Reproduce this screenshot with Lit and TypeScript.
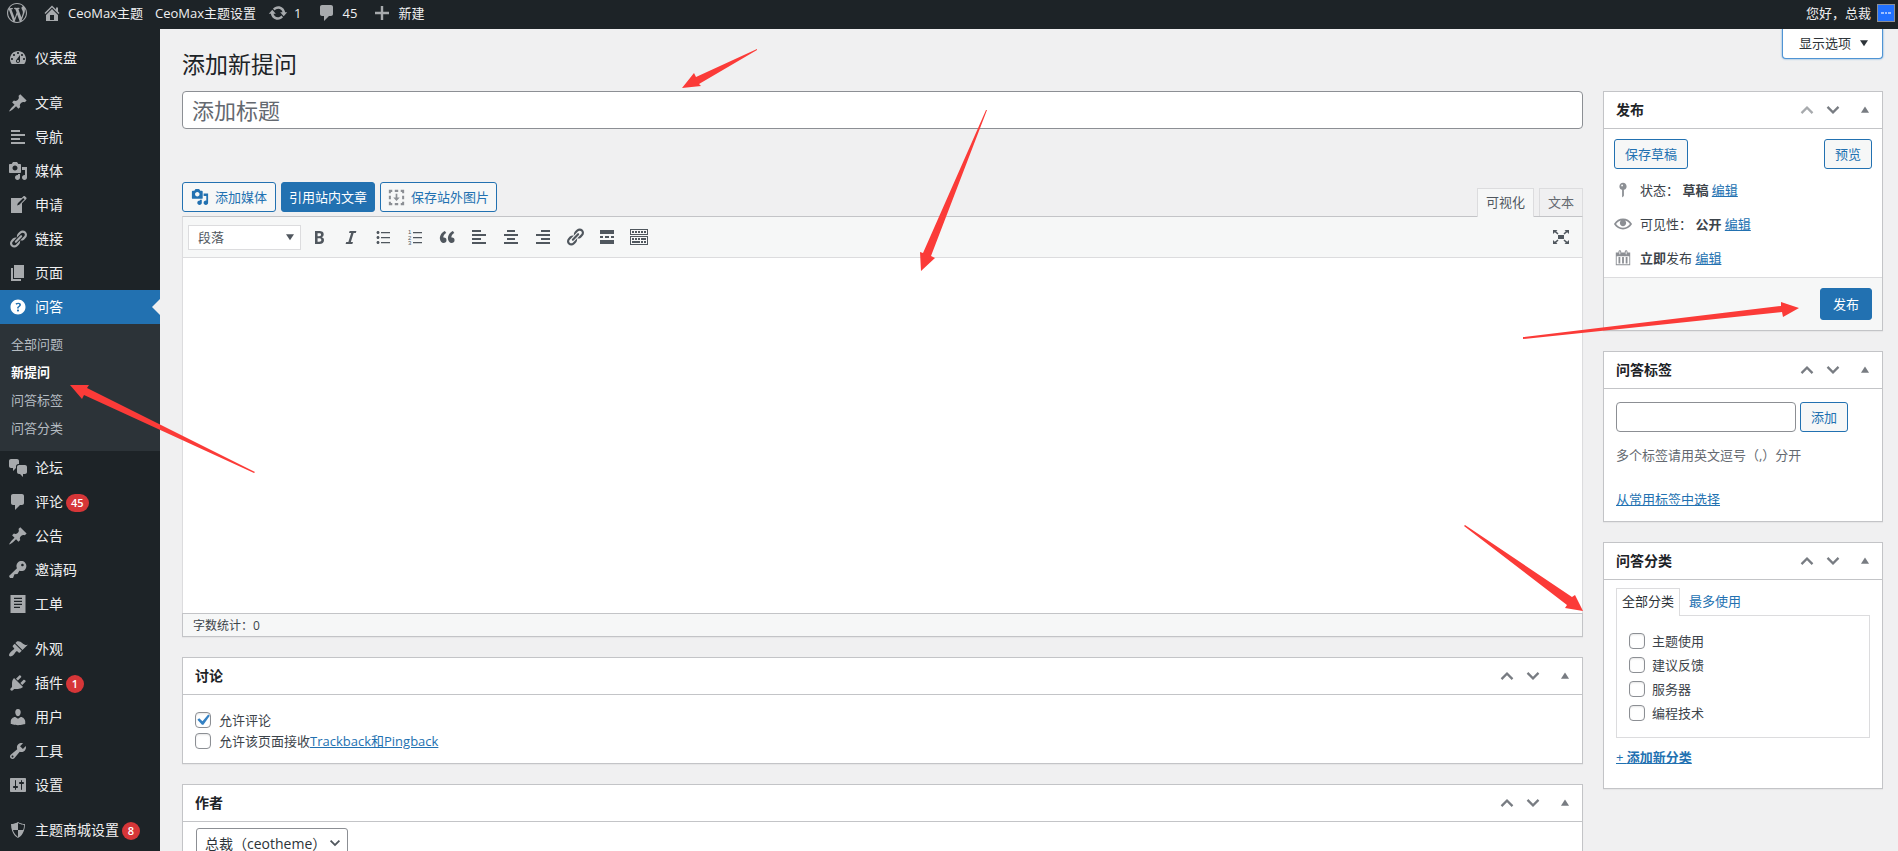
import { LitElement, html, svg, css, nothing } from "lit";
import { customElement, property } from "lit/decorators.js";
import { classMap } from "lit/directives/class-map.js";

const ICONS: Record<string, string> = {
  wordpress:
    "M20 10c0-5.51-4.49-10-10-10C4.48 0 0 4.49 0 10c0 5.52 4.48 10 10 10 5.51 0 10-4.48 10-10zM7.78 15.37L4.37 6.22c.55-.02 1.17-.08 1.17-.08.5-.06.44-1.13-.06-1.11 0 0-1.45.11-2.37.11-.18 0-.37 0-.58-.01C4.12 2.69 6.87 1.11 10 1.11c2.33 0 4.45.87 6.05 2.34-.68-.11-1.65.39-1.65 1.58 0 .74.45 1.36.9 2.1.35.61.55 1.36.55 2.46 0 1.49-1.4 5-1.4 5l-3.03-8.37c.54-.02.82-.17.82-.17.5-.05.44-1.25-.06-1.22 0 0-1.44.12-2.38.12-.87 0-2.33-.12-2.33-.12-.5-.03-.56 1.2-.06 1.22l.92.08 1.26 3.41zM17.41 10c.24-.64.74-1.87.43-4.25.7 1.29 1.05 2.71 1.05 4.25 0 3.29-1.73 6.24-4.4 7.78.97-2.59 1.94-5.2 2.92-7.78zM6.1 18.09C3.12 16.65 1.11 13.53 1.11 10c0-1.3.23-2.48.72-3.59C3.25 10.3 4.67 14.2 6.1 18.09zm4.03-6.63l2.58 6.98c-.86.29-1.76.45-2.71.45-.79 0-1.57-.11-2.29-.33.81-2.38 1.62-4.74 2.42-7.1z",
  home: "M16 8.5l1.53 1.53-1.06 1.06L10 4.6l-6.47 6.49-1.06-1.06L10 2.5l4 4v-2h2v4zm-6-2.46l6 5.99V18H4v-5.97zM12 17v-5H8v5h4z",
  update:
    "M10.2 3.28c3.53 0 6.43 2.61 6.92 6h2.08l-3.5 4-3.5-4h2.32c-.45-1.97-2.21-3.45-4.32-3.45-1.45 0-2.73.71-3.54 1.78L4.95 5.66C6.23 4.2 8.11 3.28 10.2 3.28zm-.4 13.44c-3.52 0-6.43-2.61-6.92-6H.8l3.5-4c1.17 1.33 2.33 2.67 3.5 4H5.48c.45 1.97 2.21 3.45 4.32 3.45 1.45 0 2.73-.71 3.54-1.78l1.71 1.95c-1.28 1.46-3.15 2.38-5.25 2.38z",
  comments: "M5 2h9c1.1 0 2 .9 2 2v7c0 1.1-.9 2-2 2h-2l-5 5v-5H5c-1.1 0-2-.9-2-2V4c0-1.1.9-2 2-2z",
  plus: "M17 8.800v2.400h-5.800V17H8.800v-5.800H3V8.800h5.800V3h2.400v5.800H17z",
  dashboard:
    "M3.76 16h12.48c1.1-1.37 1.76-3.11 1.76-5 0-4.42-3.58-8-8-8s-8 3.58-8 8c0 1.89.66 3.63 1.76 5zM10 4c.55 0 1 .45 1 1s-.45 1-1 1-1-.45-1-1 .45-1 1-1zM6 6c.55 0 1 .45 1 1s-.45 1-1 1-1-.45-1-1 .45-1 1-1zm8 0c.55 0 1 .45 1 1s-.45 1-1 1-1-.45-1-1 .45-1 1-1zm-5.37 5.55L12 7v6c0 1.1-.9 2-2 2s-2-.9-2-2c0-.57.24-1.08.63-1.45zM4 10c.55 0 1 .45 1 1s-.45 1-1 1-1-.45-1-1 .45-1 1-1zm12 0c.55 0 1 .45 1 1s-.45 1-1 1-1-.45-1-1 .45-1 1-1zm-5 3c0-.55-.45-1-1-1s-1 .45-1 1 .45 1 1 1 1-.45 1-1z",
  pin: "M10.44 3.02l1.82-1.82 6.36 6.35-1.83 1.82c-1.05-.68-2.48-.57-3.41.36l-.75.75c-.92.93-1.04 2.35-.35 3.41l-1.83 1.82-2.41-2.41-2.8 2.79c-.42.42-3.38 2.71-3.8 2.29s1.86-3.39 2.28-3.81l2.79-2.79L4.1 9.36l1.83-1.82c1.05.69 2.48.57 3.4-.36l.75-.75c.93-.92 1.05-2.35.36-3.41z",
  alignleft: "M12 5V3H3v2h9zm5 4V7H3v2h14zm-5 4v-2H3v2h9zm5 4v-2H3v2h14z",
  aligncenter: "M14 5V3H6v2h8zm3 4V7H3v2h14zm-3 4v-2H6v2h8zm3 4v-2H3v2h14z",
  alignright: "M17 5V3H8v2h9zm0 4V7H3v2h14zm0 4v-2H8v2h9zm0 4v-2H3v2h14z",
  media:
    "M13 11V4c0-.55-.45-1-1-1h-1.67L9 1H5L3.67 3H2c-.55 0-1 .45-1 1v7c0 .55.45 1 1 1h10c.55 0 1-.45 1-1zM7 4.5c1.38 0 2.5 1.12 2.5 2.5S8.38 9.5 7 9.5 4.5 8.38 4.5 7 5.62 4.5 7 4.5zM14 6h5v10.5c0 1.38-1.12 2.5-2.5 2.5S14 17.88 14 16.5s1.12-2.5 2.5-2.5c.17 0 .34.02.5.05V9h-3V6zm-4 8.05V13h2v3.5c0 1.38-1.12 2.5-2.5 2.5S7 17.88 7 16.5 8.12 14 9.5 14c.17 0 .34.02.5.05z",
  write:
    "M16.89 1.2l1.41 1.41c.39.39.39 1.02 0 1.41L14 8.33V18H3V3h10.67l1.8-1.8c.4-.39 1.03-.4 1.42 0zm-5.66 8.48l5.37-5.36-1.42-1.42-5.36 5.37-.71 2.12z",
  link: "M17.74 2.76c1.68 1.69 1.68 4.41 0 6.1l-1.53 1.52c-1.12 1.12-2.7 1.47-4.14 1.09l2.62-2.61.76-.77.76-.76c.84-.84.84-2.2 0-3.04-.84-.85-2.2-.85-3.04 0l-.77.76-3.38 3.38c-.37-1.44-.02-3.02 1.1-4.14l1.52-1.53c1.69-1.68 4.42-1.68 6.1 0zM8.59 13.43l5.34-5.34c.42-.42.42-1.1 0-1.52-.44-.43-1.13-.39-1.53 0l-5.33 5.34c-.42.42-.42 1.1 0 1.52.44.43 1.13.39 1.52 0zm-.76 2.29l4.14-4.15c.38 1.44.03 3.02-1.09 4.14l-1.52 1.53c-1.69 1.68-4.41 1.68-6.1 0-1.68-1.68-1.68-4.42 0-6.1l1.53-1.52c1.12-1.12 2.7-1.47 4.14-1.1l-4.14 4.15c-.85.84-.85 2.2 0 3.05.84.84 2.2.84 3.04 0z",
  page: "M6 15V2h10v13H6zm-1 1h8v2H3V5h2v11z",
  help: "M17.500 10c0-4.140-3.360-7.500-7.500-7.500S2.500 5.860 2.500 10s3.360 7.500 7.500 7.500 7.500-3.360 7.500-7.500zm-6.800 1.480H9.14v-.43c0-.38.08-.7.24-.98s.46-.57.88-.89c.41-.29.68-.53.81-.71.14-.18.2-.39.2-.62 0-.25-.09-.44-.28-.58-.19-.13-.45-.19-.79-.19-.58 0-1.25.19-2 .57l-.64-1.28c.87-.49 1.8-.74 2.77-.74.81 0 1.45.2 1.92.58.48.39.71.91.71 1.55 0 .43-.09.8-.29 1.11-.19.32-.57.67-1.11 1.06-.38.28-.61.49-.71.63-.1.15-.15.34-.15.57v.35zm-1.470 2.740c-.18-.17-.27-.42-.27-.73 0-.33.08-.58.26-.75s.43-.25.77-.25c.32 0 .57.09.75.26s.27.42.27.74c0 .3-.09.55-.27.72-.18.18-.43.27-.75.27-.33 0-.58-.09-.76-.26z",
  chat: "M11 6h-.82C9.07 6 8 7.2 8 8.16V10l-3 3v-3H3c-1.1 0-2-.9-2-2V3c0-1.1.9-2 2-2h6c1.1 0 2 .9 2 2v3zm0 1h6c1.1 0 2 .9 2 2v5c0 1.1-.9 2-2 2h-2v3l-3-3h-1c-1.1 0-2-.9-2-2V9c0-1.1.9-2 2-2z",
  key: "M16.95 2.58c1.96 1.95 1.96 5.12 0 7.07-1.51 1.51-3.75 1.84-5.59 1.01l-1.87 3.31-2.99.31L5 18H2l-1-2 7.95-7.69c-.92-1.87-.62-4.18.93-5.73 1.95-1.96 5.12-1.96 7.07 0zm-2.51 3.79c.74 0 1.33-.6 1.33-1.34 0-.73-.59-1.33-1.33-1.33-.73 0-1.33.6-1.33 1.33 0 .74.6 1.34 1.33 1.34z",
  document: "M2.500 1v18h15V1h-15zM12 14H6v-1.200h6V14zm2-3H6V9.800h8V11zm0-3H6V6.800h8V8zm0-3H6V3.800h8V5z",
  appearance:
    "M14.48 11.06L7.41 3.99l1.5-1.5c.5-.56 2.3-.47 3.51.32 1.21.8 1.43 1.28 2.91 2.1 1.18.64 2.45 1.26 4.45.85zm-.71.71L6.7 4.7 4.93 6.47c-.39.39-.39 1.02 0 1.41l1.06 1.06c.39.39.39 1.03 0 1.42-.6.6-1.43 1.11-2.21 1.69-.35.26-.7.53-1.01.84C1.43 14.23.4 16.08 1.4 17.07c.99 1 2.84-.03 4.18-1.36.31-.31.58-.66.85-1.02.57-.78 1.08-1.61 1.69-2.21.39-.39 1.02-.39 1.41 0l1.06 1.06c.39.39 1.02.39 1.41 0z",
  plugins:
    "M13.11 4.36L9.87 7.6 8 5.73l3.24-3.24c.35-.34 1.05-.2 1.56.32.52.51.66 1.21.31 1.55zm-8 1.77l.91-1.12 9.01 9.01-1.19.84c-.71.71-2.63 1.16-3.82 1.16H6.14L4.9 17.26c-.59.59-1.54.59-2.12 0-.59-.58-.59-1.53 0-2.12l1.24-1.24v-3.88c0-1.13.4-3.19 1.09-3.89zm7.26 3.97l3.24-3.24c.34-.35 1.04-.21 1.55.31.52.51.66 1.21.31 1.55l-3.24 3.25z",
  users:
    "M10 9.25c-2.27 0-2.73-3.44-2.73-3.44C7 4.02 7.82 2 9.97 2c2.16 0 2.98 2.02 2.71 3.81 0 0-.41 3.44-2.68 3.44zm0 2.57L12.72 10c2.39 0 4.52 2.33 4.52 4.53v2.49s-3.65 1.13-7.24 1.13c-3.65 0-7.24-1.13-7.24-1.13v-2.49c0-2.25 1.94-4.48 4.47-4.48z",
  tools:
    "M16.68 9.77c-1.34 1.34-3.3 1.67-4.95.99l-5.41 6.52c-.99.99-2.59.99-3.58 0s-.99-2.59 0-3.57l6.52-5.42c-.68-1.65-.35-3.61.99-4.95 1.28-1.28 3.12-1.62 4.72-1.06l-2.89 2.89 2.82 2.82 2.86-2.87c.53 1.58.18 3.39-1.08 4.65zM3.81 16.21c.4.39 1.04.39 1.43 0 .4-.4.4-1.04 0-1.43-.39-.4-1.03-.4-1.43 0-.39.39-.39 1.03 0 1.43z",
  settings:
    "M18 16V4c0-.55-.45-1-1-1H3c-.55 0-1 .45-1 1v12c0 .55.45 1 1 1h14c.55 0 1-.45 1-1zM8 11h1c.55 0 1 .45 1 1s-.45 1-1 1H8v1.5c0 .28-.22.5-.5.5s-.5-.22-.5-.5V13H6c-.55 0-1-.45-1-1s.45-1 1-1h1V5.5c0-.28.22-.5.5-.5s.5.22.5.5V11zm5-2h-1c-.55 0-1-.45-1-1s.45-1 1-1h1V5.5c0-.28.22-.5.5-.5s.5.22.5.5V7h1c.55 0 1 .45 1 1s-.45 1-1 1h-1v5.5c0 .28-.22.5-.5.5s-.5-.22-.5-.5V9z",
  shield: "M10 2s3 2 7 2c0 11-7 14-7 14S3 15 3 4c4 0 7-2 7-2zm0 8h5s1-1 1-5c0 0-5-1-6-2v7H5c1 4 5 7 5 7v-7z",
  status:
    "M14 6c0 1.86-1.28 3.41-3 3.86V16c0 1-2 2-2 2V9.860c-1.720-.45-3-2-3-3.860 0-2.210 1.790-4 4-4s4 1.790 4 4zM8 5c0 .55.45 1 1 1s1-.45 1-1-.45-1-1-1-1 .45-1 1z",
  eye: "M19.700 9.400C17.700 6 14 3.900 10 3.900S2.300 6 .3 9.400L0 10l.3.600c2 3.400 5.700 5.500 9.700 5.500s7.700-2.100 9.700-5.500l.3-.6-.3-.6zM10 14.100c-3.100 0-6-1.600-7.700-4.100C3.600 8 5.700 6.600 8 6.100c-.9.600-1.500 1.700-1.500 2.900 0 1.900 1.600 3.500 3.500 3.500s3.500-1.600 3.500-3.500c0-1.200-.6-2.300-1.500-2.900 2.300.5 4.400 1.900 5.700 3.900-1.700 2.500-4.600 4.100-7.700 4.100z",
  calendar:
    "M15 4h3v14H2V4h3V3c0-.83.67-1.500 1.500-1.500S8 2.170 8 3v1h4V3c0-.83.67-1.500 1.500-1.500S15 2.170 15 3v1zM6 3v2.500c0 .28.22.5.5.5s.5-.22.5-.5V3c0-.28-.22-.5-.5-.5S6 2.720 6 3zm7 0v2.500c0 .28.22.5.5.5s.5-.22.5-.5V3c0-.28-.22-.5-.5-.5s-.5.22-.5.5zm4 14V8H3v9h14zM7 16V9H5v7h2zm4 0V9H9v7h2zm4 0V9h-2v7h2z",
  bold: "M6 4v13h4.54c1.37 0 2.46-.33 3.26-1 .8-.66 1.2-1.58 1.2-2.77 0-.84-.17-1.51-.51-2.01s-.9-.85-1.67-1.03v-.09c.57-.1 1.02-.4 1.36-.9s.51-1.13.51-1.91c0-1.14-.39-1.98-1.17-2.5C12.75 4.26 11.5 4 9.78 4H6zm2.57 5.15V6.26h1.36c.73 0 1.27.11 1.61.32.34.22.51.58.51 1.07 0 .54-.16.92-.47 1.15s-.82.35-1.51.35h-1.5zm0 2.19h1.6c1.44 0 2.16.53 2.16 1.61 0 .6-.17 1.05-.51 1.34s-.86.43-1.57.43H8.57v-3.38z",
  italic: "M14.780 6h-2.130l-2.800 9h2.120l-.620 2H4.600l.620-2h2.140l2.800-9H8.030l.620-2h6.750z",
  bullets:
    "M5 7C4.170 7 3.500 6.330 3.500 5.500S4.170 4 5 4s1.500.670 1.500 1.500S5.830 7 5 7zM8 5h9v1.200H8V5zm-3 7c-.83 0-1.500-.67-1.500-1.500S4.170 9 5 9s1.500.670 1.500 1.500S5.830 12 5 12zm3-2h9v1.200H8V10zm-3 7c-.83 0-1.500-.67-1.500-1.500S4.170 14 5 14s1.500.670 1.500 1.500S5.830 17 5 17zm3-2h9v1.200H8V15z",
  quote:
    "M9.49 13.22c0-.74-.2-1.38-.61-1.9-.62-.78-1.83-.88-2.53-.72-.29-1.65 1.11-3.75 2.92-4.65L7.88 4c-2.73 1.3-5.42 4.28-4.96 8.05C3.21 14.43 4.59 16 6.54 16c.85 0 1.56-.25 2.12-.75s.83-1.18.83-2.03zm8.05 0c0-.74-.2-1.38-.61-1.9-.63-.78-1.83-.88-2.53-.72-.29-1.65 1.11-3.75 2.92-4.65L15.93 4c-2.73 1.3-5.41 4.28-4.95 8.05.29 2.38 1.66 3.95 3.61 3.95.85 0 1.56-.25 2.12-.75s.83-1.18.83-2.03z",
  more: "M17 7V3H3v4h14zM6 11V9H3v2h3zm6 0V9H8v2h4zm5 0V9h-3v2h3zm0 6v-4H3v4h14z",
  sink: "M19 2v6H1V2h18zm-1 5V3H2v4h16zM5 4v2H3V4h2zm3 0v2H6V4h2zm3 0v2H9V4h2zm3 0v2h-2V4h2zm3 0v2h-2V4h2zm2 5v9H1V9h18zm-1 8v-7H2v7h16zM5 11v2H3v-2h2zm3 0v2H6v-2h2zm3 0v2H9v-2h2zm6 0v2h-5v-2h5zm-6 3v2H3v-2h8zm3 0v2h-2v-2h2zm3 0v2h-2v-2h2z",
  fullscreen:
    "M7 8h6v4H7zM2 3h4.500L5.200 4.300 7.500 6.600 6.600 7.500 3.800 5.200 2 7zM18 3v4l-1.800-1.800-2.800 2.300-.9-.9 2.300-2.300L13.500 3zM2 17v-4l1.800 1.800 2.800-2.300.9.900-2.300 2.300L6.500 17zM18 17h-4.500l1.300-1.300-2.300-2.300.9-.9 2.800 2.300L18 13z",
  capture:
    "M1 1h4v2.400H3.400V5H1zM8 1h4v2.400H8zM15 1h4v4h-2.400V3.400H15zM1 8h2.400v4H1zM16.600 8H19v4h-2.400zM1 15h2.400v1.600H5V19H1zM8 16.600h4V19H8zM16.600 15H19v4h-4v-2.400h1.600zM9 5.500h2V10h2.800L10 14.200 6.200 10H9z",
  up: "M10 6l6.300 6.300-1.600 1.600L10 9.200l-4.700 4.700-1.600-1.600z",
  down: "M10 14L3.700 7.700l1.600-1.600L10 10.800l4.700-4.700 1.600 1.600z",
  toggle: "M10 6l4.500 7h-9z",
  caret: "M5 6.500h10l-5 7.500z",
};

@customElement("wp-icon")
export class WpIcon extends LitElement {
  @property() name = "";

  static styles = css`
    :host {
      display: inline-block;
      flex: none;
      width: 20px;
      height: 20px;
    }
    .glyph {
      display: block;
      width: 100%;
      height: 100%;
      fill: currentColor;
    }
    .digits {
      font: 6px "Liberation Sans", sans-serif;
    }
  `;

  render() {
    const shape =
      this.name === "numbers"
        ? svg`<path d="M8 5h9v1.200H8zM8 10h9v1.200H8zM8 15h9v1.200H8z"/>
            <text class="digits" x="3" y="7">1</text>
            <text class="digits" x="3" y="12.500">2</text>
            <text class="digits" x="3" y="18">3</text>`
        : svg`<path fill-rule="evenodd" d=${ICONS[this.name] ?? ""} />`;
    return html`<svg class="glyph" viewBox="0 0 20 20" aria-hidden="true">${shape}</svg>`;
  }
}

@customElement("meta-box")
export class MetaBox extends LitElement {
  @property() heading = "";
  @property({ type: Boolean }) first = false;

  static styles = css`
    :host {
      display: block;
      background: #fff;
      border: 1px solid #c3c4c7;
      box-shadow: 0 1px 1px rgba(0, 0, 0, 0.04);
    }
    .head {
      display: flex;
      align-items: center;
      height: 36px;
      padding: 0 4px 0 12px;
      border-bottom: 1px solid #c3c4c7;
    }
    .title {
      flex: 1;
      margin: 0;
      font-size: 14px;
      font-weight: 600;
      line-height: 20px;
      color: #1d2327;
    }
    .handle {
      display: grid;
      place-items: center;
      width: 26px;
      height: 36px;
      padding: 0;
      border: 0;
      background: none;
      color: #787c82;
    }
    .handle.muted {
      color: #a7aaad;
    }
    .handle.toggle {
      margin-left: 6px;
    }
    .small {
      width: 18px;
      height: 18px;
    }
  `;

  render() {
    return html`
      <header class="head">
        <h2 class="title">${this.heading}</h2>
        <button class=${classMap({ handle: true, muted: this.first })} type="button" aria-label="上移">
          <wp-icon name="up"></wp-icon>
        </button>
        <button class="handle" type="button" aria-label="下移"><wp-icon name="down"></wp-icon></button>
        <button class="handle toggle" type="button" aria-label="切换面板">
          <wp-icon class="small" name="toggle"></wp-icon>
        </button>
      </header>
      <slot></slot>
    `;
  }
}

interface MenuItem {
  icon: string;
  label: string;
  count?: number;
  children?: string[];
}

const MENU: MenuItem[][] = [
  [{ icon: "dashboard", label: "仪表盘" }],
  [
    { icon: "pin", label: "文章" },
    { icon: "alignleft", label: "导航" },
    { icon: "media", label: "媒体" },
    { icon: "write", label: "申请" },
    { icon: "link", label: "链接" },
    { icon: "page", label: "页面" },
    { icon: "help", label: "问答", children: ["全部问题", "新提问", "问答标签", "问答分类"] },
    { icon: "chat", label: "论坛" },
    { icon: "comments", label: "评论", count: 45 },
    { icon: "pin", label: "公告" },
    { icon: "key", label: "邀请码" },
    { icon: "document", label: "工单" },
  ],
  [
    { icon: "appearance", label: "外观" },
    { icon: "plugins", label: "插件", count: 1 },
    { icon: "users", label: "用户" },
    { icon: "tools", label: "工具" },
    { icon: "settings", label: "设置" },
  ],
  [{ icon: "shield", label: "主题商城设置", count: 8 }],
];

const TOOLS: [string, string][] = [
  ["bold", "粗体"],
  ["italic", "斜体"],
  ["bullets", "项目符号列表"],
  ["numbers", "编号列表"],
  ["quote", "段落引用"],
  ["alignleft", "左对齐"],
  ["aligncenter", "居中对齐"],
  ["alignright", "右对齐"],
  ["link", "插入链接"],
  ["more", "插入阅读更多标签"],
  ["sink", "工具栏切换"],
];

const CATEGORIES = ["主题使用", "建议反馈", "服务器", "编程技术"];

const ARROWS = [
  "682,88 694,73 696,77 757,49 757,50 699,84 701,86",
  "921,271 920,252 923,253 986,110 987,110 931,256 935,258",
  "70,385 89,385 87,388 255,472 254,473 84,395 82,399",
  "1799,308 1781,302 1781,306 1523,337 1523,339 1782,312 1783,317",
  "1583,611 1575,595 1572,597 1465,525 1464,526 1567,605 1565,608",
];

@customElement("app-root")
export class AppRoot extends LitElement {
  static styles = css`
    :host {
      position: relative;
      display: flex;
      flex-direction: column;
      height: 100vh;
      overflow: hidden;
      background: #f0f0f1;
      color: #3c434a;
      font: 13px/20px "Open Sans", "Noto Sans CJK SC", sans-serif;
    }
    * {
      box-sizing: border-box;
    }
    a {
      color: #2271b1;
    }
    button,
    input,
    select {
      font-family: inherit;
    }

    .bar {
      display: flex;
      flex: none;
      align-items: center;
      height: 29px;
      padding: 0 3px 4px 7px;
      background: #1d2327;
    }
    .bar a {
      display: flex;
      align-items: center;
      gap: 6px;
      margin-right: 15px;
      color: #f0f0f1;
      text-decoration: none;
    }
    .bar .site {
      margin-right: 12px;
    }
    .bar wp-icon {
      color: #a7aaad;
    }
    .bar .account {
      margin: 0 0 0 auto;
    }
    .avatar {
      width: 18px;
      height: 18px;
      border: 1px solid #8c8f94;
      background: #2271ff;
    }

    .body {
      display: flex;
      flex: 1;
      min-height: 0;
    }
    .side {
      flex: none;
      width: 160px;
      padding-top: 12px;
      overflow: hidden;
      background: #1d2327;
    }
    .group,
    .submenu {
      margin: 0;
      padding: 0;
      list-style: none;
    }
    .group {
      margin-bottom: 11px;
    }
    .entry {
      position: relative;
      display: flex;
      align-items: center;
      height: 34px;
      padding: 0 8px;
      font-size: 14px;
      color: #f0f0f1;
      text-decoration: none;
    }
    .entry wp-icon {
      margin-right: 7px;
      color: #a7aaad;
    }
    .entry.current {
      background: #2271b1;
      color: #fff;
    }
    .entry.current wp-icon {
      color: #fff;
    }
    .entry.current::after {
      content: "";
      position: absolute;
      right: 0;
      border: 8px solid transparent;
      border-right-color: #f0f0f1;
      border-left-width: 0;
    }
    .count {
      min-width: 18px;
      height: 18px;
      margin: 2px 0 0 3px;
      padding: 0 5px;
      border-radius: 9px;
      background: #d63638;
      color: #fff;
      font-size: 11px;
      font-weight: 600;
      line-height: 18px;
      text-align: center;
    }
    .submenu {
      padding: 6px 0 9px;
      background: #2c3338;
    }
    .submenu a {
      display: block;
      padding: 4px 11px;
      color: #b5bcc2;
      text-decoration: none;
    }
    .submenu .on {
      color: #fff;
      font-weight: 600;
    }

    .content {
      position: relative;
      flex: 1;
      min-width: 0;
      padding: 20px 15px 20px 22px;
      overflow-y: auto;
      scrollbar-width: none;
    }
    .options {
      position: absolute;
      top: 0;
      right: 15px;
      display: flex;
      align-items: center;
      height: 30px;
      padding: 0 10px 2px 16px;
      border: 1px solid #4f94d4;
      border-top: 0;
      border-radius: 0 0 4px 4px;
      background: #fff;
      box-shadow: 0 0 2px #4f94d4;
      color: #2c3338;
      font-size: 13px;
      line-height: 20px;
    }
    .options wp-icon {
      width: 16px;
      height: 16px;
      margin-left: 5px;
    }
    .heading {
      margin: 0 0 12px;
      font-size: 23px;
      font-weight: 400;
      line-height: 30px;
      color: #1d2327;
    }
    .columns {
      display: grid;
      grid-template-columns: minmax(0, 1fr) 280px;
      gap: 20px;
      align-items: start;
    }
    .stack {
      display: grid;
      gap: 20px;
    }
    .field {
      width: 100%;
      margin: 0;
      border: 1px solid #8c8f94;
      border-radius: 4px;
      background: #fff;
      color: #2c3338;
    }
    .subject {
      display: block;
      height: 38px;
      padding: 0 9px;
      font-size: 22px;
    }
    .subject::placeholder {
      color: #646970;
      opacity: 1;
    }

    .btn {
      display: inline-flex;
      flex: none;
      align-items: center;
      justify-content: center;
      gap: 6px;
      height: 30px;
      margin: 0;
      padding: 0 10px 1px;
      border: 1px solid #2271b1;
      border-radius: 3px;
      background: #f6f7f7;
      color: #2271b1;
      font-size: 13px;
      line-height: 20px;
    }
    .btn.primary {
      background: #2271b1;
      color: #fff;
    }
    .btn.large {
      height: 32px;
      padding: 0 12px 1px;
    }
    .btn.tight {
      padding: 0 7px 1px;
    }
    .btn.media {
      padding: 0 8px;
    }
    .btn.media wp-icon {
      width: 18px;
      height: 18px;
    }
    .btn.capture {
      padding: 0 7px;
    }
    .btn.capture wp-icon {
      width: 17px;
      height: 17px;
      color: #8c8f94;
    }

    .tools {
      display: flex;
      gap: 5px;
      align-items: flex-start;
      margin-top: 33px;
    }
    .tabs {
      display: flex;
      gap: 5px;
      margin: 6px 0 0 auto;
    }
    .tab {
      height: 28px;
      padding: 0 8px 1px;
      border: 1px solid #dcdcde;
      border-bottom: 0;
      background: #f0f0f1;
      color: #646970;
      font-size: 13px;
      line-height: 20px;
    }
    .tab.on {
      z-index: 1;
      height: 29px;
      margin-bottom: -1px;
      padding-bottom: 2px;
      background: #f6f7f7;
      color: #50575e;
    }
    .editor {
      border: 1px solid #dcdcde;
      border-top-color: #c3c4c7;
      background: #fff;
      box-shadow: 0 1px 1px rgba(0, 0, 0, 0.04);
    }
    .toolbar {
      display: flex;
      gap: 4px;
      align-items: center;
      height: 41px;
      padding: 0 5px;
      border-bottom: 1px solid #dcdcde;
      background: #f6f7f7;
    }
    .tool {
      display: grid;
      place-items: center;
      width: 28px;
      height: 28px;
      padding: 0;
      border: 0;
      background: none;
      color: #50575e;
    }
    .tool.last {
      margin: 0 2px 0 auto;
    }
    .picker {
      position: relative;
      display: block;
    }
    .picker select {
      display: block;
      width: 100%;
      appearance: none;
      margin: 0;
    }
    .picker wp-icon {
      position: absolute;
      pointer-events: none;
    }
    .format {
      width: 113px;
      color: #50575e;
    }
    .format select {
      height: 25px;
      padding: 0 9px;
      border: 1px solid #dcdcde;
      border-radius: 0;
      background: #fff;
      color: #50575e;
      font-size: 13px;
    }
    .format wp-icon {
      top: 4px;
      right: 3px;
      width: 16px;
      height: 16px;
    }
    .canvas {
      height: 355px;
      outline: 0;
    }
    .words {
      margin: 0 -1px -1px;
      padding: 2px 10px 0;
      border: 1px solid #c3c4c7;
      background: #f6f7f7;
      font-size: 12px;
    }

    .discussion {
      padding: 15px 12px 11px;
    }
    .check {
      display: flex;
      align-items: center;
      gap: 8px;
      height: 21px;
      padding-bottom: 1px;
    }
    .check input {
      display: grid;
      flex: none;
      place-content: center;
      width: 16px;
      height: 16px;
      margin: 0;
      appearance: none;
      border: 1px solid #8c8f94;
      border-radius: 4px;
      background: #fff;
      box-shadow: inset 0 1px 2px rgba(0, 0, 0, 0.1);
    }
    .check input:checked::before {
      content: "";
      width: 20px;
      height: 20px;
      background: #3582c4;
      clip-path: path("M15.200 4.600l1.600 1.200-6.400 9H9L4.400 9.800l1.800-1.600 3.300 3.100z");
    }
    .author {
      padding: 6px 13px 12px;
    }
    .author .picker {
      width: 152px;
    }
    .author select {
      height: 30px;
      padding: 0 8px;
      border: 1px solid #8c8f94;
      border-radius: 3px;
      background: #fff;
      color: #2c3338;
      font-size: 14px;
    }
    .author wp-icon {
      top: 7px;
      right: 5px;
      width: 16px;
      height: 16px;
      color: #50575e;
    }

    .publish {
      padding: 10px 10px 2px;
    }
    .pair {
      display: flex;
      justify-content: space-between;
      margin-bottom: 4px;
    }
    .row {
      display: flex;
      align-items: center;
      height: 34px;
    }
    .row wp-icon {
      width: 18px;
      height: 18px;
      margin-right: 8px;
      color: #8c8f94;
    }
    .row b {
      font-weight: 600;
    }
    .submit {
      display: flex;
      justify-content: flex-end;
      padding: 10px;
      border-top: 1px solid #dcdcde;
      background: #f6f7f7;
    }
    .tags {
      padding: 13px 12px 12px;
    }
    .adder {
      display: flex;
      gap: 4px;
    }
    .adder .field {
      width: 180px;
      height: 30px;
      padding: 0 8px;
      font-size: 14px;
    }
    .hint {
      margin: 13px 0 24px;
      color: #646970;
    }
    .cats {
      padding: 8px 12px 21px;
    }
    .catnav {
      display: flex;
    }
    .catnav a {
      padding: 3px 9px 4px;
      text-decoration: none;
    }
    .catnav .on {
      z-index: 1;
      margin-bottom: -1px;
      padding: 2px 5px 5px;
      border: 1px solid #dcdcde;
      border-bottom: 0;
      background: #fff;
      color: #2c3338;
    }
    .panel {
      margin-bottom: 9px;
      padding: 14px 12px 11px;
      border: 1px solid #dcdcde;
    }
    .panel .check {
      gap: 7px;
      height: 24px;
      padding-bottom: 2px;
    }
    .new {
      font-weight: 600;
    }
    .plain {
      font-weight: 400;
    }
    .arrows {
      position: absolute;
      top: 0;
      left: 0;
      z-index: 5;
      width: 1898px;
      height: 851px;
      fill: #fb3b38;
      pointer-events: none;
    }
  `;

  private renderEntry(item: MenuItem) {
    return html`<li>
      <a class=${classMap({ entry: true, current: !!item.children })} href="#">
        <wp-icon name=${item.icon}></wp-icon>${item.label}
        ${item.count ? html`<span class="count">${item.count}</span>` : nothing}
      </a>
      ${item.children
        ? html`<ul class="submenu">
            ${item.children.map(
              (label) => html`<li><a class=${classMap({ on: label === "新提问" })} href="#">${label}</a></li>`
            )}
          </ul>`
        : nothing}
    </li>`;
  }

  private renderEditor() {
    return html`
      <input class="field subject" type="text" placeholder="添加标题" aria-label="添加标题" />
      <div>
        <div class="tools">
          <button class="btn media" type="button"><wp-icon name="media"></wp-icon>添加媒体</button>
          <button class="btn primary tight" type="button">引用站内文章</button>
          <button class="btn capture" type="button"><wp-icon name="capture"></wp-icon>保存站外图片</button>
          <div class="tabs">
            <button class="tab on" type="button">可视化</button>
            <button class="tab" type="button">文本</button>
          </div>
        </div>
        <div class="editor">
          <div class="toolbar">
            <label class="picker format">
              <select aria-label="段落格式">
                <option>段落</option>
              </select>
              <wp-icon name="caret"></wp-icon>
            </label>
            ${TOOLS.map(
              ([icon, label]) => html`<button class="tool" type="button" aria-label=${label}>
                <wp-icon name=${icon}></wp-icon>
              </button>`
            )}
            <button class="tool last" type="button" aria-label="免打扰写作模式">
              <wp-icon name="fullscreen"></wp-icon>
            </button>
          </div>
          <div class="canvas" contenteditable="true" role="textbox" aria-label="正文"></div>
          <div class="words">字数统计：0</div>
        </div>
      </div>
    `;
  }

  render() {
    return html`
      <header class="bar">
        <a href="#" aria-label="WordPress"><wp-icon name="wordpress"></wp-icon></a>
        <a class="site" href="#"><wp-icon name="home"></wp-icon>CeoMax主题</a>
        <a class="site" href="#">CeoMax主题设置</a>
        <a href="#"><wp-icon name="update"></wp-icon>1</a>
        <a href="#"><wp-icon name="comments"></wp-icon>45</a>
        <a href="#"><wp-icon name="plus"></wp-icon>新建</a>
        <a class="account" href="#">
          您好，总裁
          <svg class="avatar" viewBox="0 0 16 16" aria-hidden="true">
            <path d="M3 8h3M7 8h2M10 8h3" stroke="#9fc0ff" stroke-width="2" />
          </svg>
        </a>
      </header>
      <div class="body">
        <nav class="side" aria-label="主菜单">
          ${MENU.map((group) => html`<ul class="group">${group.map((item) => this.renderEntry(item))}</ul>`)}
        </nav>
        <main class="content">
          <button class="options" type="button">显示选项<wp-icon name="caret"></wp-icon></button>
          <h1 class="heading">添加新提问</h1>
          <div class="columns">
            <div class="stack">
              ${this.renderEditor()}
              <meta-box heading="讨论">
                <div class="discussion">
                  <label class="check"><input type="checkbox" checked />允许评论</label>
                  <label class="check">
                    <input type="checkbox" />
                    <span>允许该页面接收<a href="#">Trackback和Pingback</a></span>
                  </label>
                </div>
              </meta-box>
              <meta-box heading="作者">
                <div class="author">
                  <label class="picker">
                    <select aria-label="作者">
                      <option>总裁（ceotheme）</option>
                    </select>
                    <wp-icon name="down"></wp-icon>
                  </label>
                </div>
              </meta-box>
            </div>
            <div class="stack">
              <meta-box heading="发布" first>
                <div class="publish">
                  <div class="pair">
                    <button class="btn" type="button">保存草稿</button>
                    <button class="btn" type="button">预览</button>
                  </div>
                  <div class="row">
                    <wp-icon name="status"></wp-icon>
                    <span>状态： <b>草稿</b> <a href="#">编辑</a></span>
                  </div>
                  <div class="row">
                    <wp-icon name="eye"></wp-icon>
                    <span>可见性： <b>公开</b> <a href="#">编辑</a></span>
                  </div>
                  <div class="row">
                    <wp-icon name="calendar"></wp-icon>
                    <span><b>立即</b>发布 <a href="#">编辑</a></span>
                  </div>
                </div>
                <div class="submit"><button class="btn primary large" type="button">发布</button></div>
              </meta-box>
              <meta-box heading="问答标签">
                <div class="tags">
                  <div class="adder">
                    <input class="field" type="text" aria-label="添加标签" />
                    <button class="btn" type="button">添加</button>
                  </div>
                  <p class="hint">多个标签请用英文逗号（,）分开</p>
                  <a href="#">从常用标签中选择</a>
                </div>
              </meta-box>
              <meta-box heading="问答分类">
                <div class="cats">
                  <div class="catnav">
                    <a class="on" href="#">全部分类</a>
                    <a href="#">最多使用</a>
                  </div>
                  <div class="panel">
                    ${CATEGORIES.map((label) => html`<label class="check"><input type="checkbox" />${label}</label>`)}
                  </div>
                  <a class="new" href="#"><span class="plain">+ </span>添加新分类</a>
                </div>
              </meta-box>
            </div>
          </div>
        </main>
      </div>
      <svg class="arrows" viewBox="0 0 1898 851" aria-hidden="true">
        ${ARROWS.map((points) => svg`<polygon points=${points} />`)}
      </svg>
    `;
  }
}
